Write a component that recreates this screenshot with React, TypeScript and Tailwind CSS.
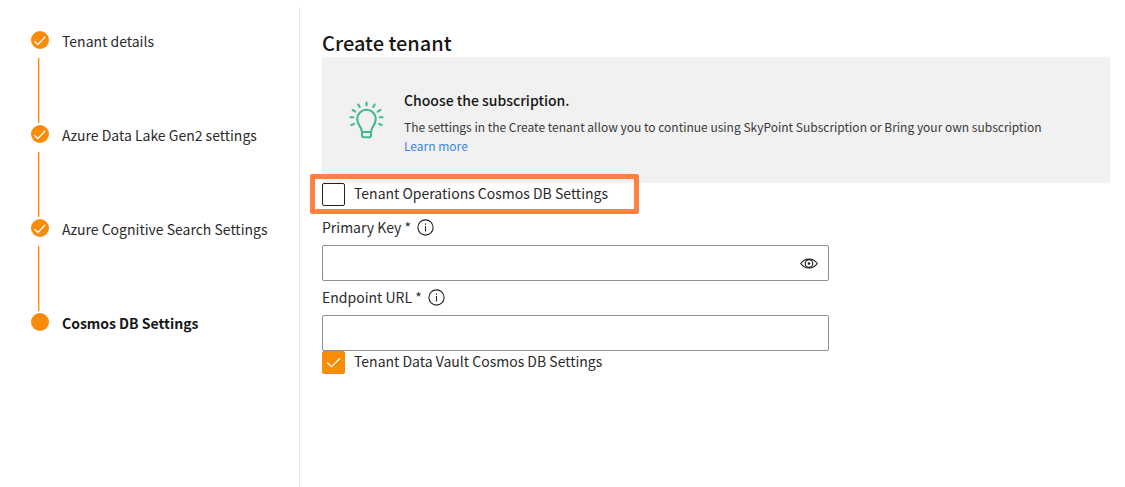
import { useState } from "react";

const steps = [
  { label: "Tenant details", done: true },
  { label: "Azure Data Lake Gen2 settings", done: true },
  { label: "Azure Cognitive Search Settings", done: true },
  { label: "Cosmos DB Settings", done: false },
];

function StepMarker({ done }: { done: boolean }) {
  return (
    <svg className="size-[18px]" viewBox="0 0 18 18" fill="none" aria-hidden="true">
      <circle cx="9" cy="9" r="9" fill="#f88b08" />
      {done && <path d="M3.4 10.2 6.9 13.5 14.2 5.8" stroke="#fff" strokeWidth="1.3" />}
    </svg>
  );
}

function Stepper() {
  return (
    <ol className="flex flex-col">
      {steps.map((step, i) => (
        <li key={step.label} className="flex gap-[13px]" aria-current={step.done ? undefined : "step"}>
          <div className="flex w-[18px] shrink-0 flex-col items-start">
            <StepMarker done={step.done} />
            {i < steps.length - 1 && (
              <span className="mt-[9px] mb-[2px] ml-[7px] h-[65px] w-px bg-[#f88b08] shadow-[1px_0_0_#fcd9ad]" />
            )}
          </div>
          <span
            className={
              step.done
                ? "text-[14px] leading-[20px] text-[#2b2b2b]"
                : "text-[14px] leading-[20px] font-bold text-[#171717]"
            }
          >
            {step.label}
          </span>
        </li>
      ))}
    </ol>
  );
}

function BulbIcon() {
  return (
    <svg
      className="mt-[11px] h-[38px] w-[36px] shrink-0"
      viewBox="0 0 36 38"
      fill="none"
      stroke="#41b995"
      strokeWidth="2.1"
      strokeLinecap="round"
      strokeLinejoin="round"
      aria-hidden="true"
    >
      <path d="M13 31.5c0-6-4.800-7.300-4.800-13.400a9.300 9.300 0 0 1 18.600 0c0 6.100-4.800 7.400-4.800 13.400" />
      <path d="M13 31h9v3.500a1.800 1.800 0 0 1-1.800 1.800h-5.400a1.800 1.800 0 0 1-1.800-1.800z" />
      <path d="M17.500 1.500v2.800M9.300 3.500l1.400 2.500M25.700 3.500l-1.400 2.500M3.700 9l2.600 1.600M31.300 9l-2.600 1.600M1.400 16.300h2.800M33.600 16.300h-2.800M2.400 24l2.600-1M32.600 24l-2.600-1" />
    </svg>
  );
}

function InfoIcon() {
  return (
    <svg className="size-[17px]" viewBox="0 0 17 17" fill="none" stroke="#222" aria-hidden="true">
      <circle cx="8.500" cy="8.500" r="7.600" strokeWidth="1.100" />
      <path d="M8.500 7v5.500M8.500 4.500v1.300" strokeWidth="1.100" />
    </svg>
  );
}

function EyeIcon() {
  return (
    <svg className="h-[11px] w-[18px]" viewBox="0 0 18 11" fill="none" stroke="#222" aria-hidden="true">
      <path d="M.8 5.500C4.600-.4 13.400-.4 17.200 5.500 13.400 11.400 4.600 11.400.8 5.500z" strokeWidth="1.200" />
      <circle cx="9" cy="5.500" r="3.800" strokeWidth="1.200" />
      <circle cx="9" cy="5.500" r="1.300" fill="#222" stroke="none" />
    </svg>
  );
}

type CheckProps = { label: string; checked: boolean; onChange: (value: boolean) => void };

function CheckField({ label, checked, onChange }: CheckProps) {
  return (
    <label className="flex items-start gap-[9px] text-[14px] leading-[21px] text-[#2b2b2b]">
      <span className="grid shrink-0">
        <input
          type="checkbox"
          checked={checked}
          onChange={(e) => onChange(e.target.checked)}
          className="col-start-1 row-start-1 size-[23px] appearance-none rounded-[2px] border border-[#222] bg-white checked:border-[#f88b08] checked:bg-[#f88b08]"
        />
        {checked && (
          <svg
            className="pointer-events-none col-start-1 row-start-1 size-[23px]"
            viewBox="0 0 23 23"
            fill="none"
            stroke="#fff"
            strokeWidth="1.300"
            aria-hidden="true"
          >
            <path d="M5.300 11.700 9.500 15.700 18 7.200" />
          </svg>
        )}
      </span>
      {label}
    </label>
  );
}

const inputClass =
  "h-[36px] w-full rounded-[2px] border border-[#8f8f8f] bg-white px-2 text-[14px] text-[#222] outline-none focus:border-[#f88b08]";

export default function App() {
  const [operations, setOperations] = useState(false);
  const [vault, setVault] = useState(true);
  const [showKey, setShowKey] = useState(false);

  return (
    <div className="flex min-h-screen bg-white pt-[7px] font-['Noto_Sans_CJK_SC',sans-serif] text-[#2b2b2b]">
      <nav aria-label="Setup steps" className="w-[300px] shrink-0 border-r border-[#e6e6e6] pt-[24px] pl-[31px]">
        <Stepper />
      </nav>

      <main className="min-w-0 flex-1 pt-[22px] pr-[15px] pl-[22px]">
        <h1 className="text-[20px] leading-[28px] font-medium text-[#171717]">Create tenant</h1>

        <section className="flex items-start gap-[19px] rounded-[2px] bg-[#f1f1f1] pt-[33px] pb-[28px] pl-[27px]">
          <BulbIcon />
          <div>
            <h2 className="mb-[7px] text-[14px] leading-[20px] font-medium text-[#171717]">
              Choose the subscription.
            </h2>
            <p className="text-[12px] leading-[19px] text-[#3a3a3a]">
              The settings in the Create tenant allow you to continue using SkyPoint Subscription or
              Bring your own subscription
            </p>
            <a href="#learn-more" className="block text-[12px] leading-[19px] text-[#3b86e8]">
              Learn more
            </a>
          </div>
        </section>

        <form className="max-w-[507px]">
          <div className="relative mb-[5px] w-fit">
            <CheckField
              label="Tenant Operations Cosmos DB Settings"
              checked={operations}
              onChange={setOperations}
            />
            <span className="pointer-events-none absolute -top-[9px] -right-[31px] -bottom-[8px] -left-[12px] rounded-[2px] border-5 border-[#ff8142]" />
          </div>

          <div className="flex h-[34px] items-center gap-[6px] pb-[2px]">
            <label htmlFor="primary-key" className="text-[14px] leading-[20px]">
              Primary Key *
            </label>
            <InfoIcon />
          </div>
          <div className="grid items-center">
            <input
              id="primary-key"
              type={showKey ? "text" : "password"}
              className={`${inputClass} col-start-1 row-start-1`}
            />
            <button
              type="button"
              aria-label="Show primary key"
              onClick={() => setShowKey(!showKey)}
              className="col-start-1 row-start-1 mr-[11px] justify-self-end"
            >
              <EyeIcon />
            </button>
          </div>

          <div className="flex h-[34px] items-center gap-[6px] pb-[2px]">
            <label htmlFor="endpoint-url" className="text-[14px] leading-[20px]">
              Endpoint URL *
            </label>
            <InfoIcon />
          </div>
          <input id="endpoint-url" type="text" className={`${inputClass} block`} />

          <CheckField label="Tenant Data Vault Cosmos DB Settings" checked={vault} onChange={setVault} />
        </form>
      </main>
    </div>
  );
}
